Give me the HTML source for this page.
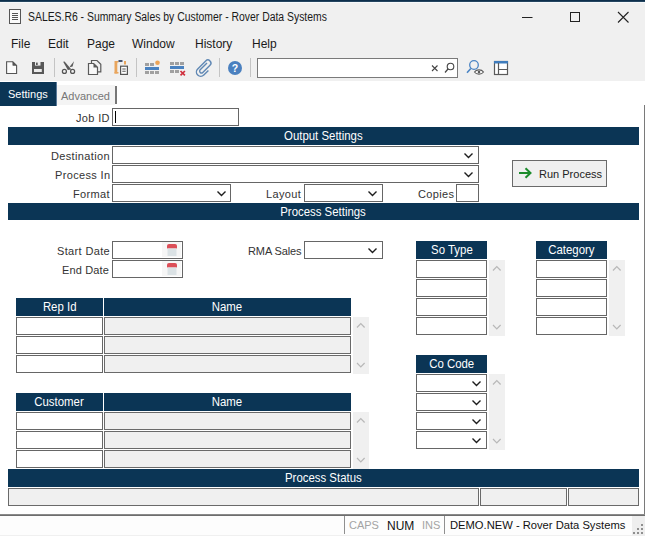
<!DOCTYPE html>
<html><head><meta charset="utf-8">
<style>
*{box-sizing:border-box;margin:0;padding:0}
html,body{width:645px;height:536px;overflow:hidden;background:#fff;font-family:"Liberation Sans",sans-serif;color:#222}
.a{position:absolute}
#top{left:0;top:0;width:645px;height:81px;background:#f0f0f0}
#strip{left:0;top:0;width:645px;height:3px;background:linear-gradient(#0d2f4c 0,#0d2f4c 1px,#24455f 1px,#24455f 2px,#f6f9fb 2px)}
.t{position:absolute;white-space:nowrap;line-height:1}
.menu{font-size:12px;color:#1a1a1a;top:38px}
.sep{position:absolute;width:1px;top:58px;height:19px;background:#c4c4c4}
.lbl{position:absolute;white-space:nowrap;font-size:11px;color:#333;line-height:1;letter-spacing:0.35px}
.box{position:absolute;border:1px solid #666;background:#fff;height:18px}
.gbox{position:absolute;border:1px solid #6a6a6a;background:#f0f0f0;height:18px}
.hdr{position:absolute;background:#0b3555;color:#fff;font-size:12px;line-height:18px;text-align:center;white-space:nowrap}
.hdr span{display:inline-block;transform:scaleX(0.95)}
.chev{position:absolute;width:12px;height:8px}
.sb{position:absolute;background:#f0f0f0;width:16px}
</style></head><body>
<div id="top" class="a"></div>
<div id="strip" class="a"></div>

<!-- title icon -->
<svg class="a" style="left:8px;top:8px" width="14" height="17" viewBox="0 0 14 17">
  <rect x="1.5" y="1.5" width="11" height="14" fill="#fafafa" stroke="#555" stroke-width="1"/>
  <path d="M4 5.5h6M4 7.5h6M4 9.5h6M4 11.5h6" stroke="#555" stroke-width="1"/>
</svg>
<div class="t" style="left:28px;top:11px;font-size:12px;color:#1a1a1a;transform:scaleX(0.867);transform-origin:0 0">SALES.R6 - Summary Sales by Customer - Rover Data Systems</div>

<!-- window buttons -->
<svg class="a" style="left:515px;top:5px" width="125" height="24" viewBox="0 0 125 24">
  <path d="M7 12.5h10.5" stroke="#222" stroke-width="1"/>
  <rect x="55.5" y="7.5" width="9" height="9" fill="none" stroke="#222" stroke-width="1"/>
  <path d="M103 7l10.5 10.5M113.5 7L103 17.5" stroke="#222" stroke-width="1.1"/>
</svg>

<!-- menu -->
<div class="t menu" style="left:11px">File</div>
<div class="t menu" style="left:48px">Edit</div>
<div class="t menu" style="left:87px">Page</div>
<div class="t menu" style="left:132px">Window</div>
<div class="t menu" style="left:195px">History</div>
<div class="t menu" style="left:252px">Help</div>

<!-- toolbar -->
<svg class="a" style="left:0;top:54px" width="645" height="26" viewBox="0 54 645 26">
  <!-- new doc -->
  <path d="M6.6 61.8h6.2l3.8 3.6v8.1h-10z" fill="#fbfbfb" stroke="#555" stroke-width="1.1"/>
  <path d="M12.6 61.6l4.2 4v-0.2h-4.2z" fill="#555"/>
  <path d="M12.8 61.8v3.6h3.8z" fill="#555"/>
  <!-- save -->
  <rect x="32" y="62" width="12" height="12" fill="#585858"/>
  <rect x="35" y="62" width="5.5" height="3.6" fill="#ececec"/>
  <rect x="36" y="62.6" width="1.7" height="2.4" fill="#585858"/>
  <rect x="34" y="69" width="7.8" height="3" fill="#ececec"/>
  <!-- scissors -->
  <path d="M63.2 61.8L64.6 61.6L71.4 69.6L67.8 69.9z" fill="#5a5a5a"/>
  <path d="M74 61.2L72.6 66.6L69.6 67.2L70.6 65.4z" fill="#5a5a5a"/>
  <circle cx="64.4" cy="71.4" r="2" fill="none" stroke="#555" stroke-width="1.25"/>
  <circle cx="72.6" cy="71.4" r="2" fill="none" stroke="#555" stroke-width="1.25"/>
  <!-- copy -->
  <path d="M91.5 63v-2.5h5.5l3.8 3.8v7.5h-3" fill="none" stroke="#5a5a5a" stroke-width="1.2"/>
  <path d="M88.5 63.5h5.2l3.8 3.8v7.2h-9z" fill="#f8f8f8" stroke="#5a5a5a" stroke-width="1.2"/>
  <path d="M93.5 63.5l4 4h-4z" fill="#5a5a5a"/>
  <!-- paste -->
  <rect x="114.5" y="61" width="2.8" height="12.5" fill="#e9a65e"/>
  <rect x="114.5" y="72" width="4" height="1.5" fill="#e9a65e"/>
  <rect x="117" y="61" width="1.5" height="1.5" fill="#e9a65e"/>
  <rect x="118.5" y="60" width="4" height="2" fill="#4a5670"/>
  <rect x="124" y="61" width="2" height="3.5" fill="#e9a65e"/>
  <rect x="120.6" y="66.2" width="6.8" height="8.2" fill="#fff" stroke="#555" stroke-width="1.2"/>
  <path d="M122.3 69h3.4M122.3 71.3h3.4" stroke="#555" stroke-width="1.1"/>
  <!-- grid add -->
  <g fill="#a0a0a0"><rect x="145" y="63" width="4" height="3"/><rect x="150" y="63" width="4" height="3"/>
  <rect x="145" y="71" width="4" height="3"/><rect x="150" y="71" width="4" height="3"/><rect x="155" y="71" width="4" height="3"/></g>
  <rect x="145" y="67" width="14" height="3" fill="#4a82c0"/>
  <circle cx="157.5" cy="62.8" r="2.3" fill="#eda456"/>
  <!-- grid del -->
  <g fill="#a0a0a0"><rect x="170" y="62" width="4" height="3"/><rect x="175" y="62" width="4" height="3"/><rect x="180" y="62" width="4" height="3"/>
  <rect x="170" y="70" width="4" height="3"/><rect x="175" y="70" width="4" height="3"/></g>
  <rect x="170" y="66" width="14" height="3" fill="#4a82c0"/>
  <path d="M180.5 71l4.4 4.4M184.9 71l-4.4 4.4" stroke="#d0303e" stroke-width="1.7"/>
  <!-- clip -->
  <path d="M207 63l-6.8 6.8a1.8 1.8 0 0 0 2.6 2.6l7.2-7.2a3 3 0 0 0-4.3-4.3l-8 8a4.3 4.3 0 0 0 6.1 6.1l4.6-4.6" fill="none" stroke="#6088b4" stroke-width="1.4"/>
  <!-- help -->
  <circle cx="235" cy="68" r="7" fill="#4a80bf"/>
  <text x="235" y="71.8" font-family="Liberation Sans" font-weight="bold" font-size="10.5" fill="#fff" text-anchor="middle">?</text>
  <!-- eye search -->
  <circle cx="474" cy="65" r="4.3" fill="none" stroke="#4a84c4" stroke-width="1.3"/>
  <path d="M470.8 68.5l-3.8 4.2" stroke="#4a84c4" stroke-width="1.6"/>
  <path d="M474.5 72c2-2.8 7-2.8 9 0c-2 2.8-7 2.8-9 0z" fill="#fff" stroke="#5a5a5a" stroke-width="1.1"/>
  <circle cx="479" cy="72" r="1.3" fill="#5a5a5a"/>
  <!-- layout -->
  <rect x="494.5" y="61.5" width="13" height="13" fill="#fff" stroke="#5a5a5a" stroke-width="1.2"/>
  <rect x="494" y="61" width="14" height="2.5" fill="#3f7cbc"/>
  <path d="M498.5 63v11M498.5 69.5h9" stroke="#5a5a5a" stroke-width="1.2"/>
</svg>
<div class="sep" style="left:54px"></div>
<div class="sep" style="left:136px"></div>
<div class="sep" style="left:219px"></div>
<div class="sep" style="left:250px"></div>
<div class="a" style="left:257px;top:58px;width:201px;height:20px;border:1px solid #7a7a7a;background:#fff"></div>
<svg class="a" style="left:428px;top:60px" width="30" height="16" viewBox="0 0 30 16">
  <path d="M4 5.5l5.5 5.5M9.5 5.5l-5.5 5.5" stroke="#444" stroke-width="1.1"/>
  <circle cx="22.5" cy="6.5" r="3.3" fill="none" stroke="#444" stroke-width="1.1"/>
  <path d="M20 9l-3 3.5" stroke="#444" stroke-width="1.2"/>
</svg>

<!-- tabs -->
<div class="a" style="left:0;top:82px;width:57px;height:24px;background:#0b3555;border-right:1px solid #5a7a9a"></div>
<div class="t" style="left:8px;top:89px;font-size:11px;color:#fff">Settings</div>
<div class="a" style="left:57px;top:85px;width:58px;height:20px;background:#f4f4f4"></div>
<div class="a" style="left:115px;top:86px;width:2px;height:18px;background:#777"></div>
<div class="t" style="left:61px;top:91px;font-size:11px;color:#777">Advanced</div>

<!-- right frame line -->
<div class="a" style="left:644px;top:105px;width:1px;height:410px;background:#7a7a7a"></div>

<!-- Job ID -->
<div class="lbl" style="left:76px;top:113px">Job ID</div>
<div class="box" style="left:112px;top:108px;width:127px"></div>
<div class="a" style="left:115px;top:111px;width:1px;height:12px;background:#000"></div>

<div class="hdr" style="left:8px;top:127px;width:631px"><span>Output Settings</span></div>

<div class="lbl" style="left:51px;top:151px">Destination</div>
<div class="box" style="left:112px;top:146px;width:367px"></div>
<div class="lbl" style="left:55px;top:170px">Process In</div>
<div class="box" style="left:112px;top:165px;width:367px"></div>
<div class="lbl" style="left:73px;top:189px">Format</div>
<div class="box" style="left:112px;top:184px;width:119px"></div>
<div class="lbl" style="left:266px;top:189px">Layout</div>
<div class="box" style="left:304px;top:184px;width:79px"></div>
<div class="lbl" style="left:418px;top:189px">Copies</div>
<div class="box" style="left:456px;top:184px;width:23px"></div>

<!-- run process -->
<div class="a" style="left:512px;top:160px;width:95px;height:27px;border:1px solid #6a6a6a;background:#f0f0f0"></div>
<svg class="a" style="left:517px;top:166px" width="16" height="14" viewBox="0 0 16 14">
  <path d="M2 7h11.5M8.5 2.2l5 4.8-5 4.8" fill="none" stroke="#1c8c2c" stroke-width="2"/>
</svg>
<div class="t" style="left:539px;top:168px;font-size:11.6px;color:#222;transform:scaleX(0.95);transform-origin:0 0">Run Process</div>

<div class="hdr" style="left:8px;top:203px;width:631px;height:17px;line-height:19px"><span>Process Settings</span></div>

<!-- dates -->
<div class="lbl" style="left:57px;top:246px">Start Date</div>
<div class="box" style="left:112px;top:241px;width:71px"></div>
<div class="lbl" style="left:62px;top:265px;letter-spacing:0.15px">End Date</div>
<div class="box" style="left:112px;top:260px;width:71px"></div>

<div class="lbl" style="left:248px;top:246px;letter-spacing:-0.1px">RMA Sales</div>
<div class="box" style="left:304px;top:241px;width:79px"></div>

<!-- Rep table -->
<div class="hdr" style="left:16px;top:298px;width:87px"><span>Rep Id</span></div>
<div class="hdr" style="left:104px;top:298px;width:247px"><span>Name</span></div>
<div class="box" style="left:16px;top:317px;width:87px"></div>
<div class="gbox" style="left:104px;top:317px;width:247px"></div>
<div class="box" style="left:16px;top:336px;width:87px"></div>
<div class="gbox" style="left:104px;top:336px;width:247px"></div>
<div class="box" style="left:16px;top:355px;width:87px"></div>
<div class="gbox" style="left:104px;top:355px;width:247px"></div>
<div class="sb" style="left:353px;top:317px;height:57px"></div>

<!-- Customer table -->
<div class="hdr" style="left:16px;top:393px;width:87px"><span>Customer</span></div>
<div class="hdr" style="left:104px;top:393px;width:247px"><span>Name</span></div>
<div class="box" style="left:16px;top:412px;width:87px"></div>
<div class="gbox" style="left:104px;top:412px;width:247px"></div>
<div class="box" style="left:16px;top:431px;width:87px"></div>
<div class="gbox" style="left:104px;top:431px;width:247px"></div>
<div class="box" style="left:16px;top:450px;width:87px"></div>
<div class="gbox" style="left:104px;top:450px;width:247px"></div>
<div class="sb" style="left:353px;top:412px;height:57px"></div>

<!-- So Type -->
<div class="hdr" style="left:416px;top:241px;width:71px"><span>So Type</span></div>
<div class="box" style="left:416px;top:260px;width:71px"></div>
<div class="box" style="left:416px;top:279px;width:71px"></div>
<div class="box" style="left:416px;top:298px;width:71px"></div>
<div class="box" style="left:416px;top:317px;width:71px"></div>
<div class="sb" style="left:489px;top:260px;height:76px"></div>

<!-- Category -->
<div class="hdr" style="left:536px;top:241px;width:71px"><span>Category</span></div>
<div class="box" style="left:536px;top:260px;width:71px"></div>
<div class="box" style="left:536px;top:279px;width:71px"></div>
<div class="box" style="left:536px;top:298px;width:71px"></div>
<div class="box" style="left:536px;top:317px;width:71px"></div>
<div class="sb" style="left:609px;top:260px;height:76px"></div>

<!-- Co Code -->
<div class="hdr" style="left:416px;top:355px;width:71px"><span>Co Code</span></div>
<div class="box" style="left:416px;top:374px;width:71px"></div>
<div class="box" style="left:416px;top:393px;width:71px"></div>
<div class="box" style="left:416px;top:412px;width:71px"></div>
<div class="box" style="left:416px;top:431px;width:71px"></div>
<div class="sb" style="left:489px;top:374px;height:76px"></div>

<!-- process status -->
<div class="hdr" style="left:8px;top:469px;width:631px"><span>Process Status</span></div>
<div class="gbox" style="left:8px;top:488px;width:471px"></div>
<div class="gbox" style="left:480px;top:488px;width:87px"></div>
<div class="gbox" style="left:568px;top:488px;width:71px"></div>

<!-- status bar -->
<div class="a" style="left:0;top:516px;width:645px;height:20px;background:#fdfdfd;border-bottom:1px solid #f0f0f0"></div>
<div class="a" style="left:0;top:514px;width:645px;height:1px;background:#8a8a8a"></div>
<div class="a" style="left:0;top:515px;width:645px;height:1px;background:#6e6e6e"></div>
<div class="a" style="left:344px;top:516px;width:1px;height:18px;background:#909090"></div>
<div class="a" style="left:444px;top:516px;width:1px;height:18px;background:#909090"></div>
<div class="t" style="left:349px;top:520px;font-size:11px;color:#a4a4a4">CAPS</div>
<div class="t" style="left:387px;top:520px;font-size:12px;color:#111">NUM</div>
<div class="t" style="left:422px;top:520px;font-size:11px;color:#a4a4a4">INS</div>
<div class="t" style="left:450px;top:520px;font-size:11.2px;color:#111">DEMO.NEW - Rover Data Systems</div>

<!-- chevrons & icons overlay -->
<svg class="a" style="left:0;top:0" width="645" height="536" viewBox="0 0 645 536">
 <g fill="none" stroke="#1e1e1e" stroke-width="1.4">
  <path d="M464.5 153.5l4 4 4-4"/>
  <path d="M464.5 172.5l4 4 4-4"/>
  <path d="M217.5 191.5l4 4 4-4"/>
  <path d="M368.5 191.5l4 4 4-4"/>
  <path d="M368.5 248.5l4 4 4-4"/>
  <path d="M472.5 381.5l4 4 4-4"/>
  <path d="M472.5 400.5l4 4 4-4"/>
  <path d="M472.5 419.5l4 4 4-4"/>
  <path d="M472.5 438.5l4 4 4-4"/>
 </g>
 <g fill="none" stroke="#b8b8b8" stroke-width="1.2">
  <path d="M357 327.5l3.8-4 3.8 4"/><path d="M357 363l3.8 4 3.8-4"/>
  <path d="M357 422.5l3.8-4 3.8 4"/><path d="M357 458l3.8 4 3.8-4"/>
  <path d="M493 270.5l3.8-4 3.8 4"/><path d="M493 325l3.8 4 3.8-4"/>
  <path d="M613 270.5l3.8-4 3.8 4"/><path d="M613 325l3.8 4 3.8-4"/>
  <path d="M493 384.5l3.8-4 3.8 4"/><path d="M493 439l3.8 4 3.8-4"/>
 </g>
 <!-- calendars -->
 <rect x="162" y="242" width="19" height="15" fill="#f6f6f6"/>
 <path d="M167 248.5v-2.5q0-2 2-2h6q2 0 2 2v2.5z" fill="#dc4f58"/>
 <rect x="167.5" y="248.5" width="9" height="7.5" fill="#dbe2e5"/>
 <rect x="162" y="261" width="19" height="15" fill="#f6f6f6"/>
 <path d="M167 267.5v-2.5q0-2 2-2h6q2 0 2 2v2.5z" fill="#dc4f58"/>
 <rect x="167.5" y="267.5" width="9" height="7.5" fill="#dbe2e5"/>
 <!-- grip -->
 <rect x="632" y="516" width="13" height="20" fill="#eeeeee"/>
 <g fill="#8f8f8f"><rect x="641" y="524" width="2" height="2"/><rect x="637" y="528" width="2" height="2"/><rect x="641" y="528" width="2" height="2"/>
 <rect x="633" y="532" width="2" height="2"/><rect x="637" y="532" width="2" height="2"/><rect x="641" y="532" width="2" height="2"/></g>
</svg>
</body></html>
